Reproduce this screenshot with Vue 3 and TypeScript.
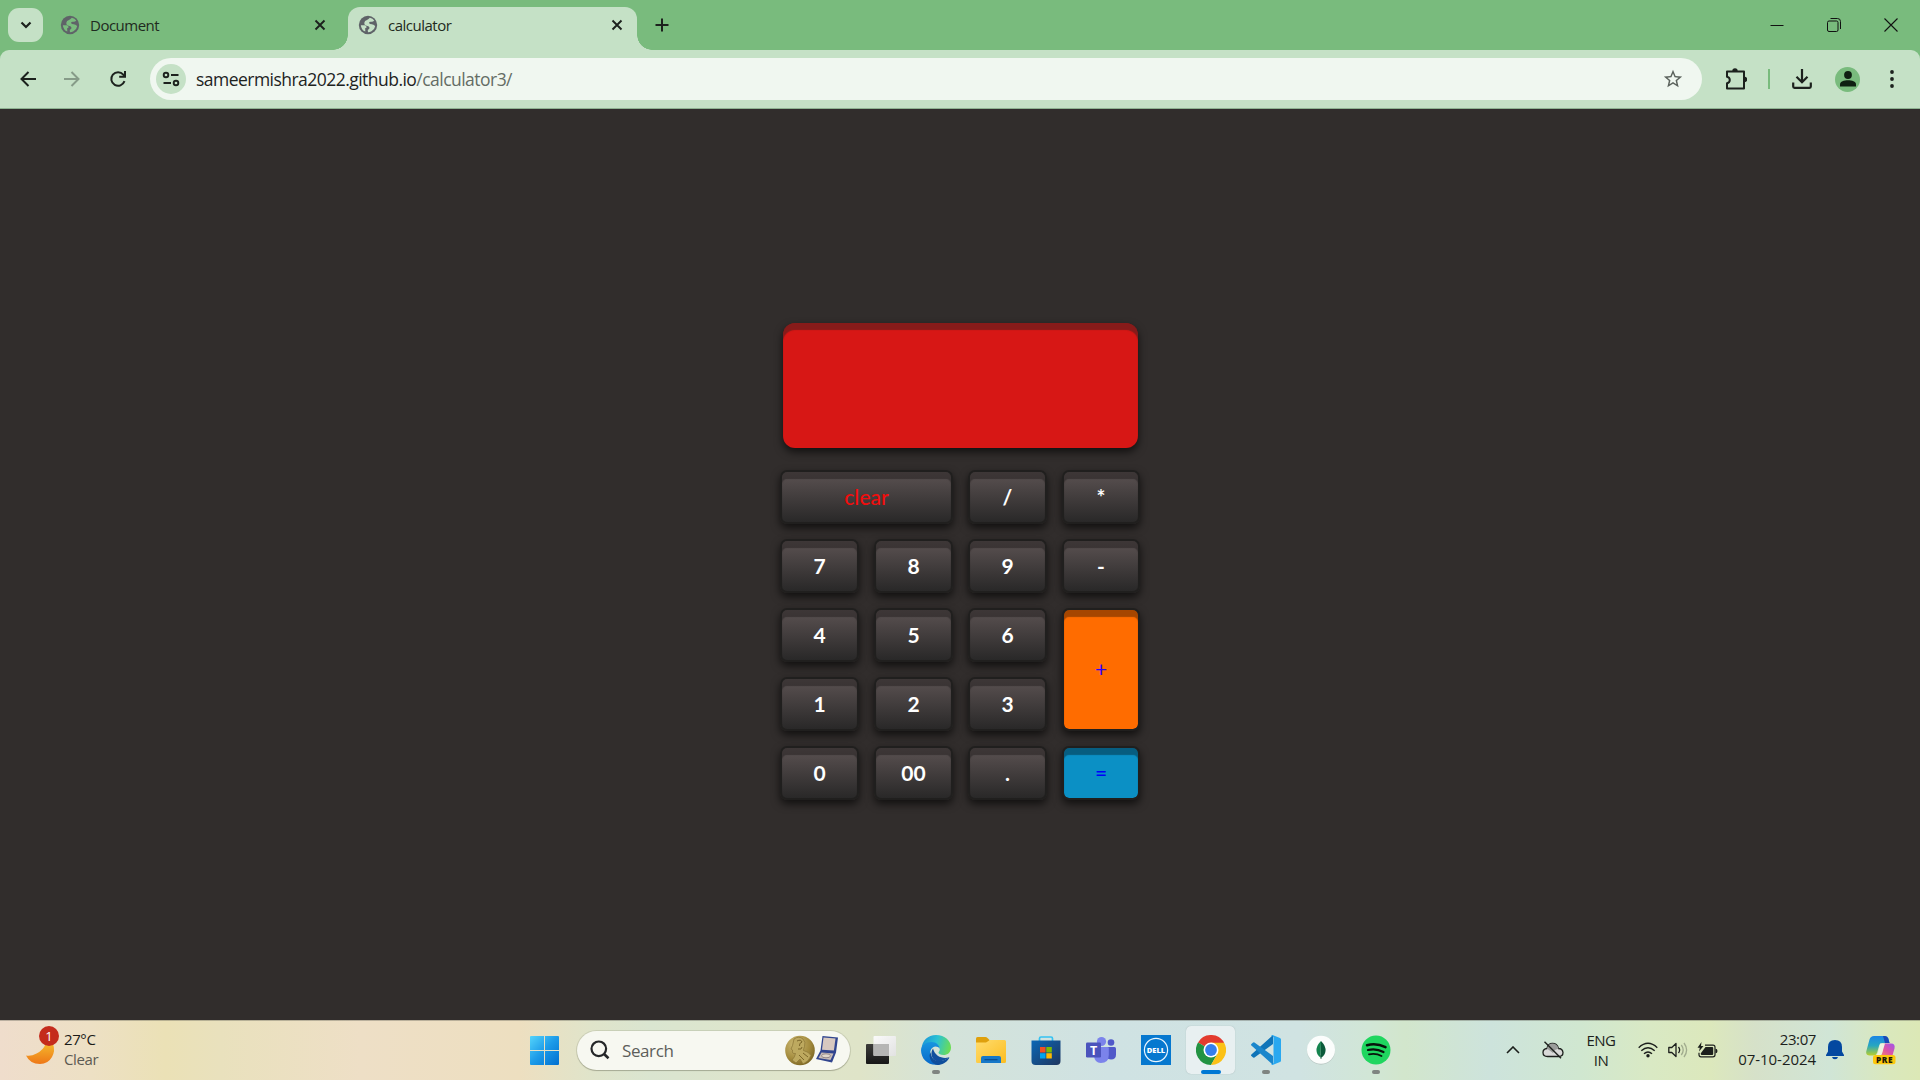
<script setup lang="ts">
import { ref } from 'vue'

interface Key {
  label: string
  kind?: 'clear' | 'plus' | 'equals'
}

interface Tab {
  title: string
  active: boolean
}

const tabs: Tab[] = [
  { title: 'Document', active: false },
  { title: 'calculator', active: true },
]

const keys: Key[] = [
  { label: 'clear', kind: 'clear' },
  { label: '/' },
  { label: '*' },
  { label: '7' },
  { label: '8' },
  { label: '9' },
  { label: '-' },
  { label: '4' },
  { label: '5' },
  { label: '6' },
  { label: '+', kind: 'plus' },
  { label: '1' },
  { label: '2' },
  { label: '3' },
  { label: '0' },
  { label: '00' },
  { label: '.' },
  { label: '=', kind: 'equals' },
]

const display = ref('')

function evaluate(expression: string): string {
  const tokens = expression.match(/\d+\.?\d*|\.\d+|[-+*/]/g) ?? []
  const values: number[] = [Number(tokens[0] ?? 0)]
  for (let i = 1; i < tokens.length - 1; i += 2) {
    const n = Number(tokens[i + 1])
    if (tokens[i] === '*') values.push((values.pop() ?? 0) * n)
    else if (tokens[i] === '/') values.push((values.pop() ?? 0) / n)
    else values.push(tokens[i] === '-' ? -n : n)
  }
  return String(values.reduce((sum, v) => sum + v, 0))
}

function press(key: Key): void {
  if (key.kind === 'clear') display.value = ''
  else if (key.kind === 'equals') display.value = evaluate(display.value)
  else display.value += key.label
}
</script>

<template>
  <div class="screen">
    <header class="tabstrip">
      <button class="tab-search">
        <svg width="12" height="8" viewBox="0 0 12 8"><path d="M1.5 1.5 6 6l4.500-4.500" fill="none" stroke="#1c211d" stroke-width="2.200" /></svg>
      </button>
      <div v-for="tab in tabs" :key="tab.title" class="tab" :class="{ active: tab.active }">
        <svg class="globe" width="22" height="22" viewBox="0 0 24 24"><circle cx="12" cy="12" r="10" fill="#5f6368" /><path class="sea" d="M14 4.200q3.300.8 4.800 3-1.600 1.600-3.300 1.200-2.500-.2-2.300 1.500.3 1.300 3 1.400 3 .5 3.600 2-.6 3.700-4 5.600-1.800 1-3.800 1.100l-.3-2.500q2.500-1.200 1.800-3-.6-1.500-3.200-1.800-2.600-.6-2.400-3 .3-2.400 3-3.200 1.800-.6 3.100-2.300zM4.200 12.200h4.300q2 .4 2 2.400l-1.600 1 .2 3.600Q4.700 17.500 4.200 12.200z" /></svg>
        <span class="tab-title">{{ tab.title }}</span>
        <svg class="tab-close" width="12" height="12" viewBox="0 0 12 12"><path d="m1.500 1.500 9 9m0-9-9 9" stroke="#1c211d" stroke-width="1.900" /></svg>
      </div>
      <svg class="new-tab" width="14" height="14" viewBox="0 0 14 14"><path d="M7 .5v13M.5 7h13" stroke="#1c211d" stroke-width="2" /></svg>
      <div class="window-controls">
        <svg width="14" height="14" viewBox="0 0 14 14"><path d="M.5 7.500h13" stroke="#111" stroke-width="1" /></svg>
        <svg width="14" height="14" viewBox="0 0 14 14" fill="none" stroke="#111"><rect x=".5" y="3" width="10.500" height="10.500" rx="1.500" /><path d="M3.500.5h7a3 3 0 0 1 3 3V11" /></svg>
        <svg width="14" height="14" viewBox="0 0 14 14"><path d="m.5.5 13 13m0-13-13 13" stroke="#111" stroke-width="1.100" /></svg>
      </div>
    </header>

    <nav class="toolbar">
      <svg class="nav-back" width="16" height="16" viewBox="0 0 16 16" fill="none" stroke="#1c211d" stroke-width="2"><path d="M16 8H2M8.500 1 1.500 8l7 7" /></svg>
      <svg class="nav-forward" width="16" height="16" viewBox="0 0 16 16" fill="none" stroke="#869b88" stroke-width="2"><path d="M0 8h14M7.500 1l7 7-7 7" /></svg>
      <svg class="nav-reload" width="18" height="18" viewBox="0 0 18 18" fill="none" stroke="#1c211d" stroke-width="2"><path d="M15.500 11.200A6.800 6.800 0 1 1 14.300 4.600l1.700 1.900M16 1v5.700h-5.800" /></svg>
      <div class="omnibox">
        <span class="site-info">
          <svg width="18" height="16" viewBox="0 0 18 16" fill="none" stroke="#1c211d" stroke-width="1.900"><circle cx="4" cy="4" r="2.300" /><path d="M9 4h7.500M1.500 12H9" /><circle cx="14" cy="12" r="2.300" /></svg>
        </span>
        <span class="url">sameermishra2022.github.io<span class="path">/calculator3/</span></span>
        <svg class="star" width="22" height="22" viewBox="0 0 24 24"><path fill="#5b625c" d="m22 9.240-7.190-.62L12 2 9.190 8.630 2 9.240l5.460 4.730L5.820 21 12 17.270 18.180 21l-1.630-7.030L22 9.240zM12 15.400l-3.760 2.270 1-4.280-3.320-2.880 4.380-.38L12 6.100l1.710 4.040 4.380.38-3.320 2.880 1 4.280L12 15.400z" /></svg>
      </div>
      <svg class="extensions" width="22" height="22" viewBox="0 0 22 22"><path d="M2 4.500h17v17H2v-5.300c3.700-.8 3.700-5.600 0-6.400z" transform="translate(0 -1)" fill="none" stroke="#1c211d" stroke-width="2" stroke-linejoin="round" /><path d="M7.300 3a2.700 2.700 0 0 1 5.400 0zM19.500 8.800a2.700 2.700 0 0 1 0 5.400z" fill="#1c211d" /></svg>
      <i class="divider"></i>
      <svg class="download" width="20" height="20" viewBox="0 0 20 20" fill="none" stroke="#1c211d" stroke-width="2.200"><path d="M10 0v13M4.500 7.800l5.500 5.500 5.500-5.500M1.200 13.500v4q0 1.300 1.300 1.300h15q1.300 0 1.300-1.300v-4" /></svg>
      <span class="avatar">
        <svg width="16" height="16" viewBox="0 0 16 16" fill="#0e1f11"><circle cx="8" cy="4" r="3.900" /><path d="M0 15.500v-2.300C0 10.500 4 9.200 8 9.200s8 1.300 8 4v2.300z" /></svg>
      </span>
      <svg class="menu" width="4" height="18" viewBox="0 0 4 18" fill="#1c211d"><circle cx="2" cy="2" r="1.900" /><circle cx="2" cy="9" r="1.900" /><circle cx="2" cy="16" r="1.900" /></svg>
    </nav>

    <main class="page">
      <div class="calculator">
        <div class="display">{{ display }}</div>
        <div class="keys">
          <button v-for="key in keys" :key="key.label" class="key" :class="key.kind" @click="press(key)">{{ key.label }}</button>
        </div>
      </div>
    </main>

    <footer class="taskbar">
      <div class="weather">
        <svg width="32" height="40" viewBox="0 0 32 40">
          <defs><linearGradient id="moon" x1="0" y1="0" x2="0" y2="1"><stop offset="0" stop-color="#f4b62c" /><stop offset="1" stop-color="#ee7717" /></linearGradient></defs>
          <path d="M0 25.500q5 1 10.500-2 7-3.500 9-9.500l7.500 0q2.500 6.500-1 13-4 7-12 7Q4 34 0 25.500z" fill="url(#moon)" />
        </svg>
        <span class="badge">1</span>
        <div class="weather-text"><span class="temp">27°C</span><span class="sky">Clear</span></div>
      </div>

      <svg class="start" width="29" height="29" viewBox="0 0 29 29">
        <defs><linearGradient id="win" x1="0" y1="0" x2="1" y2="1"><stop offset="0" stop-color="#54d4fb" /><stop offset=".5" stop-color="#1c9ae8" /><stop offset="1" stop-color="#006fd0" /></linearGradient></defs>
        <path fill="url(#win)" d="M1 0h13v14H0V1q0-1 1-1zM15 0h13q1 0 1 1v13H15zM0 15h14v14H1q-1 0-1-1zM15 15h14v13q0 1-1 1H15z" />
      </svg>

      <div class="search">
        <svg width="20" height="20" viewBox="0 0 20 20" fill="none" stroke="#252729" stroke-width="2.200"><circle cx="8.800" cy="8.800" r="7.300" /><path d="m13.800 13.800 4.700 4.500" stroke-width="2.600" /></svg>
        <span class="search-label">Search</span>
        <svg class="highlight" width="54" height="31" viewBox="0 0 54 31">
          <defs>
            <radialGradient id="medal" cx=".35" cy=".3" r=".8"><stop offset="0" stop-color="#cfbc76" /><stop offset=".6" stop-color="#a48c3e" /><stop offset="1" stop-color="#75601f" /></radialGradient>
          </defs>
          <circle cx="15" cy="15.500" r="14.800" fill="url(#medal)" />
          <path d="M9 4q5-3.500 9 0 3 3 1.500 7.500-1 2.500-1 4 5 1 7.500 5-2 6-8 8.500l-3-5-4 4-4-3q3-3 3.500-6.500-3 .5-3.200-1.500l.2-2-1.500-1 1.500-3.500z" fill="#bda95f" stroke="#8a7435" stroke-width=".7" />
          <path d="M12 6q4-2 5 1-3 1-2.500 4M13 14q4 1 4-2M14 20l5 5M18 18l5 4" fill="none" stroke="#7b6629" stroke-width="1" />
          <path d="M37.500 1 53 2.500l-2 15-4 10-16-3.500 4.500-8.500z" fill="#31458f" />
          <path d="m38.500 2.500 12 1-1.600 12-11.900-.8z" fill="#d8c9c0" />
          <path d="m36.500 17.500 12 1-3 6.500-12-2z" fill="#c8bdb8" />
          <ellipse cx="41" cy="20.800" rx="4.500" ry="2" fill="#e0d7cc" stroke="#80747b" stroke-width=".8" />
        </svg>
      </div>

      <div class="apps">
        <span class="app">
          <svg width="30" height="30" viewBox="0 0 30 30"><defs><linearGradient id="tv1" x1="0" y1="0" x2="0" y2="1"><stop offset="0" stop-color="#3c3c3a" /><stop offset="1" stop-color="#171717" /></linearGradient><linearGradient id="tv2" x1="0" y1="0" x2="1" y2="1"><stop offset="0" stop-color="#fafafa" /><stop offset="1" stop-color="#e2e2e2" /></linearGradient></defs><rect x="0" y="9" width="23" height="20" rx="1" fill="url(#tv1)" /><rect x="7.500" y="1" width="22.500" height="20" rx="1" fill="url(#tv2)" /><path d="M7.500 9H23v12H8.500q-1 0-1-1z" fill="#b5b5b4" /></svg>
        </span>
        <span class="app">
          <svg width="30" height="30" viewBox="0 0 30 30"><defs><linearGradient id="ed1" x1="0" y1=".3" x2="1" y2=".5"><stop offset="0" stop-color="#1a94d8" /><stop offset=".5" stop-color="#2bc2d3" /><stop offset="1" stop-color="#6bdd55" /></linearGradient><linearGradient id="ed2" x1="0" y1="0" x2="0" y2="1"><stop offset="0" stop-color="#1795e0" /><stop offset="1" stop-color="#0868c9" /></linearGradient></defs>
            <path d="M.5 14C1 5.500 7 0 15 0c9 0 15 6 15 12.500 0 5-3.500 7.500-7.500 7.500-3 0-5-1-5-2.200 0-1 1.300-1.500 1.300-3.800 0-3-3-5.500-6.800-5.500C6.500 8.500 2.500 10.500.5 14z" fill="url(#ed1)" />
            <path d="M0 15C.5 10 5 7 10.500 7c5 0 8.300 3.500 8.300 7-1-1.800-2.600-2.500-4.300-2.500C9.500 12 8 18 10 22.500c1.500 3.500 4.500 6 8 7C8 31.500 0 24.500 0 15z" fill="url(#ed2)" />
            <path d="M10 17c-.5 6 4 9.500 9.500 9 3.500-.3 6-2 8-3.500.500-.4 1 0 .6.700C25.500 27.500 21 30 16.500 30 11 29 8.500 24 8.500 20z" fill="#0f4e9c" /><path d="M12 13.500c-3 4.500-1.500 10 3 12.500 5 1.200 9.500-.8 12.500-3.500-6 1.500-13.500-1-15.500-9z" fill="#124f9e" /></svg>
          <i class="dot"></i>
        </span>
        <span class="app">
          <svg width="30" height="30" viewBox="0 0 30 30"><defs><linearGradient id="fo" x1="0" y1="0" x2="1" y2="1"><stop offset="0" stop-color="#ffdc6e" /><stop offset="1" stop-color="#fcbd20" /></linearGradient></defs><path d="M0 3.500Q0 2 1.500 2h8q1 0 2 1l2 2v4H0z" fill="#dfa00c" /><path d="M0 7.500h10l4-2.500h14.500Q30 5 30 6.500v20q0 1.500-1.500 1.500h-27Q0 28 0 26.500z" fill="url(#fo)" /><path d="M5 28v-5q0-2 2-2h16q2 0 2 2v5z" fill="#1778c8" /><rect x="8.500" y="24" width="13" height="1.300" fill="#0b4f93" /></svg>
        </span>
        <span class="app">
          <svg width="30" height="30" viewBox="0 0 30 30"><defs><linearGradient id="st" x1="0" y1="0" x2="1" y2="1"><stop offset="0" stop-color="#0b67b6" /><stop offset="1" stop-color="#1f365f" /></linearGradient></defs><path d="M8.500 6.500v-3Q8.500 2 10 2h10q1.500 0 1.500 1.500v3" fill="none" stroke="#35c2f2" stroke-width="1.700" /><path d="M.5 5.500h29V26q0 4-4 4h-21q-4 0-4-4z" fill="url(#st)" /><path d="M9 12h5.500v5.500H9z" fill="#f25022" /><path d="M15.300 12h5.500v5.500h-5.500z" fill="#7fba00" /><path d="M9 18.200h5.500v5.300H9z" fill="#00a4ef" /><path d="M15.300 18.200h5.500v5.300h-5.500z" fill="#ffb900" /></svg>
        </span>
        <span class="app">
          <svg width="30" height="30" viewBox="0 0 30 30"><circle cx="25" cy="7.500" r="3.300" fill="#5059c9" /><path d="M20 12h8.500q1.500 0 1.500 1.500v6q0 5-5 5-3 0-5-2z" fill="#5059c9" /><circle cx="15.500" cy="6.500" r="4.600" fill="#7b83eb" /><path d="M8 12h13.500q1.300 0 1.300 1.300V20q0 8-8 8-6 0-6.800-7z" fill="#7b83eb" /><rect y="7.500" width="15" height="15" rx="1.300" fill="#4b53bc" /><text x="7.500" y="19.500" text-anchor="middle" font-size="12.500" font-weight="700" font-family="Open Sans, sans-serif" fill="#fff">T</text></svg>
        </span>
        <span class="app">
          <svg width="30" height="30" viewBox="0 0 30 30"><rect width="30" height="30" fill="#0678cf" /><circle cx="15" cy="15" r="11.600" fill="none" stroke="#e9f5fd" stroke-width="1.200" /><text x="15" y="17.700" text-anchor="middle" textLength="18.500" lengthAdjust="spacingAndGlyphs" font-size="7.500" font-weight="800" font-family="Open Sans, sans-serif" fill="#fff">DELL</text></svg>
        </span>
        <span class="app current">
          <svg width="30" height="30" viewBox="0 0 30 30"><path d="M15 15 2 7.500A15 15 0 0 1 28 7.500z" fill="#e33b2e" /><path d="M15 15 2 7.500A15 15 0 0 0 15 30l6.500-11.200z" fill="#229342" /><path d="M15 15l6.500 3.700L15 30A15 15 0 0 0 28 7.500H15z" fill="#fbc116" /><path d="M15 7.500h13L26 5l-11 1z" fill="#e33b2e" /><circle cx="15" cy="15" r="7.500" fill="#fff" /><circle cx="15" cy="15" r="5.900" fill="#357fec" /></svg>
          <i class="dot wide"></i>
        </span>
        <span class="app">
          <svg width="30" height="30" viewBox="0 0 30 30"><path d="M22 0v9L3.500 22.500Q2.500 23 1.800 22.300L.4 21q-.8-.8 0-1.600z" fill="#0f74b8" /><path d="M22 30v-9L3.500 7.500Q2.500 7 1.800 7.700L.4 9q-.8.8 0 1.600z" fill="#1a86cc" /><path d="M21.500 0 29 3q1 .5 1 1.500v21q0 1-1 1.500l-7.500 3q-1 0-1.500-.8 2.300.5 2.500-1.700V2.500Q22 .5 20 .8q.5-.8 1.500-.8z" fill="#29a8f0" /></svg>
          <i class="dot"></i>
        </span>
        <span class="app">
          <svg width="30" height="30" viewBox="0 0 30 30"><circle cx="15" cy="15.700" r="14" fill="#b9c8c4" /><circle cx="15" cy="14.800" r="14" fill="#fbfdfc" /><path d="M15 6q-5 5-4.500 10 .5 4 4 6.500z" fill="#13834d" /><path d="M15 6q5 5 4.500 10-.5 4-4 6.500h-1z" fill="#0a5a3a" /><path d="M15 20v4" stroke="#0a5a3a" stroke-width=".8" /></svg>
        </span>
        <span class="app">
          <svg width="30" height="30" viewBox="0 0 30 30"><circle cx="15" cy="15" r="14.500" fill="#1fd65f" /><g fill="none" stroke="#07130b" stroke-linecap="round"><path d="M6 10.200q9.500-2.500 18.500 2" stroke-width="2.500" /><path d="M7 15q8-2 15.500 2" stroke-width="2.200" /><path d="M8 19.300q7-1.500 12.500 1.700" stroke-width="1.800" /></g></svg>
          <i class="dot"></i>
        </span>
      </div>

      <div class="tray">
        <svg class="t-chevron" width="14" height="8" viewBox="0 0 14 8"><path d="m1 7 6-6 6 6" fill="none" stroke="#1c1f1c" stroke-width="1.600" /></svg>
        <svg class="t-cloud" width="22" height="18" viewBox="0 0 22 18"><path d="M5.500 15.500Q1 15.500 1 11.500 1 8 5 7.500 6 2.500 10.500 2.500t6 5q4 0 4.500 4 0 4-4.500 4z" fill="#d9d9d8" stroke="#1c1f1c" stroke-width="1.300" /><path d="M5 7.500Q6 2.500 10.500 2.500t6 5L13 9l-2 3z" fill="#9a9c9a" /><path d="m2.500.8 16.500 16.500" stroke="#1c1f1c" stroke-width="1.500" /></svg>
        <div class="t-lang"><span>ENG</span><span>IN</span></div>
        <svg class="t-wifi" width="20" height="16" viewBox="0 0 20 16" fill="none" stroke="#1c1f1c" stroke-width="1.400"><path d="M.7 5.700q9.300-8.800 18.600 0M3.300 8.800q6.700-6.200 13.400 0M6 11.700q4-3.600 8 0" /><circle cx="10" cy="13.700" r="1.700" fill="#1c1f1c" stroke="none" /></svg>
        <svg class="t-volume" width="20" height="16" viewBox="0 0 20 16" fill="none" stroke="#1c1f1c" stroke-width="1.300"><path d="M.8 5.500h3L8 1.500v13l-4.200-4h-3z" stroke-linejoin="round" /><path d="M10.500 5q2.300 3 0 6" /><path d="M13.300 3q3.800 5 0 10M16 1q5.200 7 0 14" opacity=".3" /></svg>
        <svg class="t-battery" width="22" height="16" viewBox="0 0 22 16"><path d="M8 3.200H16q2 0 2 2v7.600q0 2-2 2H4q-2 0-2-2v-2" fill="none" stroke="#1c1f1c" stroke-width="1.200" /><path d="M8.500 5h6.700q1 0 1 1v6q0 1-1 1H4.800q-1 0-1-1v-.8z" fill="#1c1f1c" /><path d="M18.500 6.800q2 0 2 2.200t-2 2.200z" fill="#1c1f1c" /><path d="M4.500 0 .5 5.700h2.300L2 9.500l4.500-5.500H4z" fill="#1c1f1c" /></svg>
        <div class="t-clock"><span>23:07</span><span class="date">07-10-2024</span></div>
        <svg class="t-bell" width="18" height="20" viewBox="0 0 18 20" fill="#0448a0"><path d="M2 7q0-7 7-7t7 7v4.500l2 3.500q.3 1-.8 1H.8q-1.100 0-.8-1l2-3.500zM6 17h6q-.5 2.200-3 2.200T6 17z" /></svg>
        <svg class="t-copilot" width="30" height="30" viewBox="0 0 30 30">
          <defs>
            <linearGradient id="cp1" x1="0" y1="0" x2="0" y2="1"><stop offset="0" stop-color="#1b85e5" /><stop offset=".5" stop-color="#27a7c0" /><stop offset="1" stop-color="#b9cf2a" /></linearGradient>
            <linearGradient id="cp2" x1="1" y1="0" x2="0" y2="1"><stop offset="0" stop-color="#a054ec" /><stop offset=".5" stop-color="#dd55a5" /><stop offset="1" stop-color="#fb9060" /></linearGradient>
          </defs>
          <path d="M8 1h11q2.500 0 3.300 2.500L23.500 8H17q-3 0-4 3l-2 7q-1 2.500-3.500 2.500H4q-5 0-3.500-5l3-11Q4.500 1 8 1z" fill="url(#cp1)" />
          <path d="M17 1h2q2.500 0 3.300 2.500L23.500 8H19z" fill="#1a48b5" />
          <path d="M17.500 8.500H25q4.500 0 3.500 5L26 22H12q3 0 4-3.500z" fill="url(#cp2)" />
          <path d="M14 8.500h5l-3 10q-1 2.500-4 2.500H9q2-.5 3-3.500z" fill="#eef3e0" />
          <rect x="7" y="20" width="22.500" height="9.300" rx="2.500" fill="#fcc80d" />
          <text x="18.300" y="27.600" text-anchor="middle" textLength="16.500" font-size="8.300" font-weight="800" font-family="Open Sans, sans-serif" fill="#1d1a08">PRE</text>
        </svg>
      </div>
    </footer>
  </div>
</template>

<style>
body {
  margin: 0;
  overflow: hidden;
}
</style>

<style scoped>
.screen {
  width: 1920px;
  height: 1080px;
  display: flex;
  flex-direction: column;
  font-family: 'Open Sans', 'Noto Sans', sans-serif;
  overflow: hidden;
  background: #79bb7d;
}
.screen svg {
  display: block;
  flex: none;
}
button {
  border: 0;
  padding: 0;
  font: inherit;
}

/* Tab strip */
.tabstrip {
  height: 50px;
  display: flex;
  align-items: center;
  flex: none;
}
.tab-search {
  width: 35px;
  height: 34px;
  margin-left: 8px;
  border-radius: 11px;
  background: #c5e1c6;
  display: flex;
  align-items: center;
  justify-content: center;
}
.tab {
  position: relative;
  box-sizing: border-box;
  width: 289px;
  height: 43px;
  margin-top: 7px;
  padding: 0 14px 7px 9px;
  display: flex;
  align-items: center;
  border-radius: 12px 12px 0 0;
}
.tab:not(.active) {
  width: 290px;
  margin-left: 7px;
  margin-right: 8px;
}
.tab.active {
  background: #c5e1c6;
}
.tab.active::before,
.tab.active::after {
  content: '';
  position: absolute;
  bottom: 0;
  width: 15px;
  height: 15px;
}
.tab.active::before {
  left: -15px;
  background: radial-gradient(circle at 0 0, transparent 14.500px, #c5e1c6 15px);
}
.tab.active::after {
  right: -15px;
  background: radial-gradient(circle at 100% 0, transparent 14.500px, #c5e1c6 15px);
}
.sea {
  fill: #79bb7d;
}
.active .sea {
  fill: #c5e1c6;
}
.tab-title {
  margin-left: 9px;
  font-size: 15px;
  line-height: 20px;
  letter-spacing: -0.5px;
  color: #1f2a20;
}
.tab-close {
  margin-left: auto;
}
.new-tab {
  margin-left: 18px;
}
.window-controls {
  margin-left: auto;
  margin-right: 22px;
  display: flex;
  gap: 43px;
}

/* Toolbar */
.toolbar {
  box-sizing: border-box;
  height: 59px;
  flex: none;
  display: flex;
  align-items: center;
  background: #c5e1c6;
  border-bottom: 1px solid #8fb392;
  border-radius: 9px 9px 0 0;
}
.nav-back {
  margin-left: 20px;
}
.nav-forward {
  margin-left: 28px;
}
.nav-reload {
  margin-left: 29px;
}
.omnibox {
  box-sizing: border-box;
  width: 1552px;
  height: 42px;
  margin-left: 23px;
  padding: 0 18px 0 6px;
  border-radius: 21px;
  background: #f0f7f0;
  display: flex;
  align-items: center;
}
.site-info {
  width: 30px;
  height: 30px;
  border-radius: 50%;
  background: #c5e1c6;
  display: flex;
  align-items: center;
  justify-content: center;
}
.url {
  margin-left: 10px;
  font-size: 17.500px;
  line-height: 24px;
  letter-spacing: -0.53px;
  color: #1d231e;
}
.path {
  color: #646d65;
}
.star {
  margin-left: auto;
}
.extensions {
  margin-left: 23px;
}
.divider {
  width: 2px;
  height: 20px;
  margin-left: 21px;
  background: #79bb7d;
}
.download {
  margin-left: 22px;
}
.avatar {
  width: 25px;
  height: 25px;
  margin-left: 23px;
  border-radius: 50%;
  background: #79bb7d;
  display: flex;
  align-items: center;
  justify-content: center;
}
.menu {
  margin-left: 30px;
}

/* Page */
.page {
  flex: 1;
  display: flex;
  justify-content: center;
  align-items: flex-start;
  background: #312d2c;
}
.calculator {
  width: 360px;
  margin-top: 214px;
  display: flex;
  flex-direction: column;
  align-items: center;
  gap: 22px;
  font-family: 'Gill Sans', 'Gill Sans MT', Lato, sans-serif;
}
.display {
  box-sizing: border-box;
  width: 355px;
  height: 125px;
  margin-left: 1px;
  padding: 20px;
  border-radius: 12px;
  background: #d71715;
  box-shadow: inset 0 7px 1px rgba(37, 33, 33, 0.45), 0 4px 8px rgba(0, 0, 0, 0.65);
  display: flex;
  align-items: flex-end;
  justify-content: flex-end;
  font-size: 32px;
  color: #fff;
}
.keys {
  display: grid;
  grid-template-columns: 79px 79px 79px 78px;
  grid-auto-rows: 54px;
  gap: 15px;
}
.key {
  border: 2px solid #201f1e;
  border-radius: 7px;
  background: linear-gradient(#5b5252, #292828) padding-box;
  box-shadow: inset 0 7px 1px rgba(32, 28, 28, 0.5), 0 4px 8px rgba(0, 0, 0, 0.65);
  color: #fff;
  font-size: 21px;
  font-weight: 700;
  line-height: 26px;
}
.key.clear {
  grid-column: span 2;
  color: #f20d0d;
  font-weight: 500;
  font-size: 21px;
}
.key.plus {
  grid-row: span 2;
  background: #ff6c00 padding-box;
  color: #2a00ff;
  font-weight: 400;
  padding-bottom: 2px;
  box-shadow: inset 0 7px 1px rgba(0, 0, 0, 0.35), 0 4px 8px rgba(0, 0, 0, 0.65);
}
.key.equals {
  background: #0b90c5 padding-box;
  color: #0000fa;
  font-weight: 500;
  box-shadow: inset 0 7px 1px rgba(0, 0, 0, 0.35), 0 4px 8px rgba(0, 0, 0, 0.65);
}

/* Taskbar */
.taskbar {
  height: 60px;
  box-sizing: border-box;
  flex: none;
  display: flex;
  align-items: center;
  box-shadow: inset 0 1px 0 rgba(90, 90, 80, 0.35);
  background: linear-gradient(
    90deg,
    #efddcc 0,
    #ede0c4 90px,
    #ebe1b6 165px,
    #e9e1bd 220px,
    #eedfc6 360px,
    #eddfc0 520px,
    #e0e4ca 590px,
    #dae5d0 650px,
    #dfe5cb 780px,
    #dfe4c8 860px,
    #d4e3da 950px,
    #cfe2e3 1110px,
    #d0e3e2 1300px,
    #d1e6d6 1370px,
    #d2e6cc 1405px,
    #cde3dc 1490px,
    #d0e7d0 1580px,
    #d9e9c4 1650px,
    #dce8bc 1710px,
    #d6e1c9 1755px,
    #d0e5d6 1830px,
    #dae8bc 1890px,
    #dce8b6 1920px
  );
}
.weather {
  position: relative;
  box-sizing: border-box;
  width: 530px;
  padding-left: 26px;
  display: flex;
  align-items: center;
}
.badge {
  position: absolute;
  left: 39px;
  top: -3px;
  width: 20px;
  height: 20px;
  border-radius: 50%;
  background: #c42b1c;
  color: #fff;
  font-size: 13px;
  line-height: 20px;
  text-align: center;
}
.weather-text {
  margin-left: 6px;
  margin-bottom: 2px;
  display: flex;
  flex-direction: column;
  font-size: 15px;
  line-height: 20px;
  letter-spacing: -0.4px;
  color: #1b1b18;
}
.sky {
  color: #5c5a52;
}
.search {
  box-sizing: border-box;
  width: 273px;
  height: 39px;
  margin-left: 18px;
  padding: 0 11px 0 13px;
  border-radius: 20px;
  background: #f7f8f1;
  box-shadow: 0 0 0 1px rgba(120, 125, 100, 0.2), 0 1px 1px rgba(80, 80, 60, 0.3);
  display: flex;
  align-items: center;
}
.search-label {
  margin-left: 12px;
  margin-top: 2px;
  font-size: 17px;
  line-height: 22px;
  letter-spacing: -0.4px;
  color: #5d5e5a;
}
.highlight {
  margin-left: auto;
}
.apps {
  display: flex;
  margin-left: 3px;
}
.app {
  position: relative;
  width: 49px;
  height: 48px;
  margin: 0 3px;
  border-radius: 5px;
  display: flex;
  align-items: center;
  justify-content: center;
}
.current {
  background: #e8f0f1;
  box-shadow: 0 0 1px rgba(100, 120, 120, 0.5);
}
.dot {
  position: absolute;
  left: 20.500px;
  bottom: 0;
  width: 8px;
  height: 4px;
  border-radius: 2px;
  background: #7f8481;
}
.dot.wide {
  left: 14.500px;
  width: 20px;
  background: #0078d4;
}
.tray {
  margin-left: auto;
  display: flex;
  align-items: center;
  font-size: 15px;
  line-height: 20px;
  color: #1c1f1c;
}
.t-cloud {
  margin-left: 22px;
}
.t-lang {
  width: 34px;
  margin-left: 20px;
  display: flex;
  flex-direction: column;
  align-items: center;
  letter-spacing: -0.5px;
}
.t-wifi {
  margin-left: 20px;
}
.t-volume {
  margin-left: 10px;
}
.t-battery {
  margin-left: 9px;
}
.t-clock {
  width: 97px;
  margin-bottom: 2px;
  display: flex;
  flex-direction: column;
  align-items: flex-end;
  white-space: nowrap;
  letter-spacing: -0.4px;
}
.date {
  letter-spacing: -0.05px;
}
.t-bell {
  margin-left: 10px;
}
.t-copilot {
  margin-left: 22px;
  margin-right: 24px;
}
</style>
